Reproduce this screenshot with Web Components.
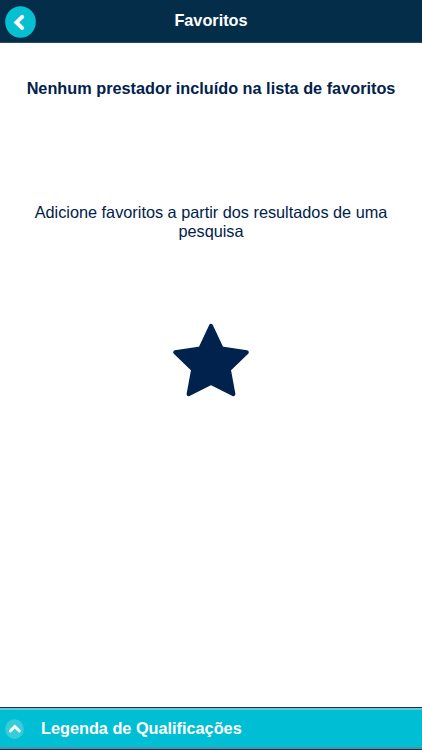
<!DOCTYPE html>
<html lang="pt-BR">
<head>
<meta charset="utf-8">
<meta name="viewport" content="width=device-width, initial-scale=1">
<title>Favoritos</title>
<style>
  html, body { margin: 0; height: 100%; }
  body { font-family: "Liberation Sans", Arial, sans-serif; font-size: 16.27px; }
</style>
</head>
<body>
<favoritos-page></favoritos-page>

<script>
(() => {
'use strict';

class RoundButton extends HTMLElement {
  constructor() {
    super()
    this.attachShadow({mode: 'open'})
    const up = this.getAttribute('dir') === 'up'
    this.shadowRoot.innerHTML = `
    <style>
      :host { display: block; flex: none; cursor: pointer; }
      svg { display: block; width: 100%; height: 100%; }
      circle { fill: var(--disc, #06bfd1); }
      path { fill: none; stroke: #fff; stroke-width: var(--stroke, 4); stroke-linecap: round; }
    </style>
    <svg viewBox="0 0 32 32" preserveAspectRatio="none">
      <circle cx="16" cy="16" r="15.8"/>
      <path d="${up ? 'M9 19 L16.5 12 L24 19' : 'M17.8 10.8 L11.8 16.4 L17.8 22'}"/>
    </svg>
  `
  }
}

class AppHeader extends HTMLElement {
  constructor() {
    super()
    this.attachShadow({mode: 'open'})
    this.shadowRoot.innerHTML = `
    <style>
      :host {
        display: grid;
        grid-template-columns: 42px 1fr 42px;
        box-sizing: border-box;
        height: 43px;
        padding-top: 6px;
        background: #032d48;
        border-bottom: 1px solid #2c4a65;
      }
      round-button { width: 31px; height: 32px; margin-left: 5px; }
      h1 {
        margin: 0;
        font-size: 1em;
        line-height: 28px;
        text-align: center;
        color: #fff;
      }
    </style>
    <round-button dir="left"></round-button>
    <h1><slot></slot></h1>
  `
  }
}

class EmptyState extends HTMLElement {
  constructor() {
    super()
    this.attachShadow({mode: 'open'})
    this.shadowRoot.innerHTML = `
    <style>
      :host {
        display: flex;
        flex-direction: column;
        align-items: center;
        flex: 1;
        padding: 36px 24px 0;
        color: #01224c;
        text-align: center;
      }
      h2 { margin: 0 0 105px; font-size: 1em; line-height: 19px; white-space: nowrap; }
      p { margin: 0 0 81px; line-height: 19px; }
      svg { display: block; width: 78px; height: 76px; }
      path { fill: #01224c; stroke: #01224c; stroke-width: 4; stroke-linejoin: round; }
    </style>
    <h2><slot name="title"></slot></h2>
    <p><slot></slot></p>
    <svg viewBox="0 0 78 76">
      <path d="M39 3.8 L49.7 26.6 L74.8 30.2 L56.9 47.6 L61.4 72.2 L39 61 L16.6 72.2 L21.1 47.6 L3.2 30.2 L28.3 26.6 Z"/>
    </svg>
  `
  }
}

class LegendBar extends HTMLElement {
  constructor() {
    super()
    this.attachShadow({mode: 'open'})
    this.shadowRoot.innerHTML = `
    <style>
      :host {
        display: block;
        border-top: 1px solid #14304c;
        border-bottom: 1px solid #14304c;
      }
      .bar {
        display: flex;
        align-items: center;
        gap: 17px;
        box-sizing: border-box;
        height: 41px;
        padding-left: 5px;
        border-top: 2px solid #62c9d6;
        border-bottom: 2px solid #4795ab;
        background: #00bed3;
        color: #fff;
        font-weight: bold;
      }
      round-button {
        width: 19px;
        height: 20px;
        --disc: #38cbd9;
        --stroke: 4.8;
      }
    </style>
    <div class="bar">
      <round-button dir="up"></round-button>
      <span><slot></slot></span>
    </div>
  `
  }
}

class FavoritosPage extends HTMLElement {
  constructor() {
    super()
    this.attachShadow({mode: 'open'})
    this.shadowRoot.innerHTML = `
    <style>
      :host { display: flex; flex-direction: column; height: 100vh; background: #fff; }
    </style>
    <app-header>Favoritos</app-header>
    <empty-state>
      <span slot="title">Nenhum prestador incluído na lista de favoritos</span>
      Adicione favoritos a partir dos resultados de uma pesquisa
    </empty-state>
    <legend-bar>Legenda de Qualificações</legend-bar>
  `
  }
}

customElements.define('round-button', RoundButton);
customElements.define('app-header', AppHeader);
customElements.define('empty-state', EmptyState);
customElements.define('legend-bar', LegendBar);
customElements.define('favoritos-page', FavoritosPage);
})();
</script>
</body>
</html>
